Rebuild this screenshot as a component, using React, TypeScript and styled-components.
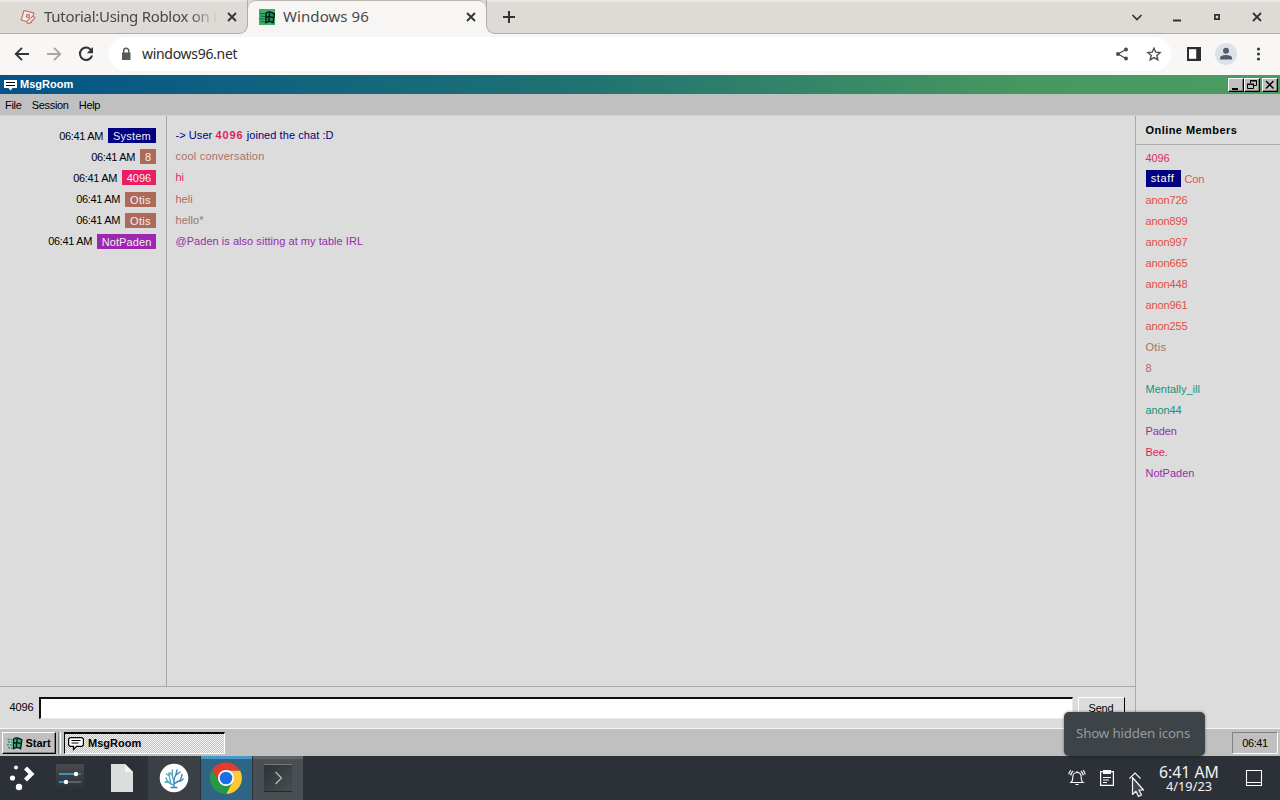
import React from "react";
import styled, { createGlobalStyle, css } from "styled-components";

const Global = createGlobalStyle`
  * { box-sizing: border-box; }
  html, body { margin: 0; padding: 0; width: 1280px; height: 800px; overflow: hidden; }
  body { font-family: "Liberation Sans", sans-serif; font-size: 11px; color: #000; }
  svg { display: block; flex: none; }
`;

const Screen = styled.div`
  position: relative;
  width: 1280px;
  height: 800px;
  display: flex;
  flex-direction: column;
  overflow: hidden;
`;

/* ---------- browser ---------- */

const TabStrip = styled.div`
  display: flex;
  height: 34px;
  flex: none;
  background: linear-gradient(#dedad6 0 16px, #f7f6f5 16px);
  font-family: "Noto Sans", sans-serif;
`;

const IdleTab = styled.div`
  width: 248px;
  display: flex;
  align-items: center;
  padding-left: 20px;
  background: #dedad6;
  border-bottom: 1px solid #b3ada8;
  border-right: 1px solid #b3ada8;
  border-radius: 0 0 9px 0;
  box-shadow: inset 0 2px 0 #e8e5e3;
`;

const ActiveTab = styled.div`
  width: 238px;
  display: flex;
  align-items: center;
  padding: 0 0 1px 11px;
  background: #f7f6f5;
  border-top: 1px solid #b9b3ae;
  border-radius: 8px 8px 0 0;
`;

const StripRest = styled.div`
  flex: 1;
  display: flex;
  align-items: center;
  padding-left: 14px;
  background: #dedad6;
  border-bottom: 1px solid #b3ada8;
  border-left: 1px solid #b3ada8;
  border-radius: 0 0 0 9px;
  box-shadow: inset 0 2px 0 #e8e5e3;
`;

const TabTitle = styled.span<{ $width: number; $fade?: boolean; $spacing?: number }>`
  width: ${(p) => p.$width}px;
  margin-left: 8px;
  margin-top: -2px;
  white-space: nowrap;
  font-size: 15px;
  line-height: 22px;
  letter-spacing: ${(p) => p.$spacing ?? 0}px;
  color: #474849;
  ${(p) =>
    p.$fade &&
    css`
      mask-image: linear-gradient(90deg, #000 145px, transparent 174px);
    `}
`;

const WindowControls = styled.div`
  margin-left: auto;
  margin-right: 15px;
  display: flex;
  gap: 24px;
`;

const Toolbar = styled.div`
  height: 41px;
  flex: none;
  display: flex;
  align-items: center;
  padding: 0 13px 1px 14px;
  background: #f8f7f6;
  font-family: "Noto Sans", sans-serif;
`;

const NavButtons = styled.div`
  display: flex;
  gap: 16px;
  width: 95px;
`;

const AddressBar = styled.div`
  width: 1062px;
  height: 34px;
  border-radius: 17px;
  background: #fff;
  display: flex;
  align-items: center;
  padding: 0 9px 0 9px;
`;

const Url = styled.span`
  flex: 1;
  margin-left: 8px;
  font-size: 14px;
  line-height: 22px;
  letter-spacing: -0.3px;
  color: #2b2b2b;
`;

const AddressActions = styled.div`
  display: flex;
  gap: 16px;
`;

const BrowserActions = styled.div`
  display: flex;
  align-items: center;
  flex: 1;
  padding-left: 14px;
`;

const Avatar = styled.div`
  width: 22px;
  height: 22px;
  margin: 0 12px;
  border-radius: 50%;
  background: #dfe1ea;
  display: flex;
  align-items: center;
  justify-content: center;
`;

/* ---------- MsgRoom window ---------- */

const TitleBar = styled.div`
  height: 19px;
  flex: none;
  display: flex;
  align-items: center;
  padding: 0 2px 0 4px;
  background: linear-gradient(90deg, #045489 0%, #1f7173 44%, #46985f 80%, #4a9d60 100%);
  color: #fff;
`;

const TitleText = styled.span<{ $start?: number; $spacing?: number }>`
  margin-left: ${(p) => p.$start ?? 3}px;
  margin-top: -1px;
  font-weight: bold;
  letter-spacing: ${(p) => p.$spacing ?? 0}px;
`;

const TitleButtons = styled.div`
  margin-left: auto;
  display: flex;
`;

const TitleButton = styled.div<{ $last?: boolean }>`
  width: 16px;
  height: 14px;
  margin-left: ${(p) => (p.$last ? 2 : 0)}px;
  background: #c0c0c0;
  border: 1px solid;
  border-color: #fff #000 #000 #fff;
  box-shadow: inset -1px -1px 0 #808080;
`;

const MenuBar = styled.div`
  height: 21px;
  flex: none;
  display: flex;
  align-items: center;
  gap: 10px;
  padding-left: 5px;
  background: #c0c0c0;
`;

const MenuItem = styled.span<{ $spacing: number }>`
  letter-spacing: ${(p) => p.$spacing}px;
  margin-right: ${(p) => -p.$spacing}px;
`;

const RoomBody = styled.div`
  flex: 1;
  min-height: 0;
  display: flex;
  background: #dcdcdc;
  border-top: 1px solid #d0d0d0;
`;

const ChatColumn = styled.div`
  width: 1135px;
  display: flex;
  flex-direction: column;
`;

const ChatLog = styled.div`
  flex: 1;
  background: linear-gradient(#a6a6a6, #a6a6a6) 166px 0 / 1px 100% no-repeat;
  padding-top: 9px;
`;

const MessageRow = styled.div`
  display: grid;
  grid-template-columns: 156px 1fr;
  column-gap: 19.5px;
  height: 21.2px;
`;

const Author = styled.div`
  display: flex;
  justify-content: flex-end;
  align-items: center;
  height: 15px;
  margin-top: 3px;
`;

const Time = styled.span`
  line-height: 15px;
  letter-spacing: -0.35px;
  padding-top: 1px;
`;

const NameBadge = styled.span<{ $color: string; $spacing?: number; $width: number }>`
  width: ${(p) => p.$width}px;
  height: 15px;
  margin-left: 5px;
  text-align: center;
  line-height: 16px;
  background: ${(p) => p.$color};
  color: #f4eef0;
  letter-spacing: ${(p) => p.$spacing ?? 0}px;
`;

const MessageText = styled.div<{ $color: string; $spacing: number }>`
  height: 15px;
  margin-top: 3px;
  line-height: 15px;
  white-space: pre;
  color: ${(p) => p.$color};
  letter-spacing: ${(p) => p.$spacing}px;
`;

const Mention = styled.b`
  color: #e01e5a;
  letter-spacing: 0.9px;
`;

const Composer = styled.div`
  height: 42px;
  flex: none;
  display: flex;
  align-items: flex-start;
  border-top: 1px solid #a9a9a9;
  padding: 10px 0 0 9.5px;
`;

const Nick = styled.span`
  width: 29.5px;
  line-height: 21px;
  letter-spacing: -0.1px;
`;

const MessageInput = styled.div`
  width: 1034px;
  height: 22px;
  background: #fff;
  border: solid;
  border-width: 2px 1px 1px 2px;
  border-color: #111 #e8e8e8 #e8e8e8 #111;
`;

const SendButton = styled.div`
  width: 47px;
  height: 21px;
  margin-left: 5px;
  border: 1px solid;
  border-color: #fff #000 #000 #fff;
  text-align: center;
  line-height: 20px;
  letter-spacing: -0.15px;
  text-indent: -1px;
`;

const Members = styled.div`
  flex: 1;
  border-left: 1px solid #a9a9a9;
`;

const MembersHeader = styled.div`
  height: 29px;
  padding-left: 9.5px;
  line-height: 29px;
  font-weight: bold;
  letter-spacing: 0.45px;
  border-bottom: 1px solid #ababab;
`;

const MemberList = styled.div`
  padding: 2px 0 0 9.5px;
`;

const Member = styled.div<{ $color: string; $spacing?: number }>`
  height: 21px;
  display: flex;
  align-items: center;
  color: ${(p) => p.$color};
  letter-spacing: ${(p) => p.$spacing ?? -0.1}px;
`;

const StaffBadge = styled.span`
  width: 35px;
  height: 17px;
  margin-right: 4px;
  padding-right: 1px;
  line-height: 17px;
  text-align: center;
  background: #000080;
  color: #fff;
  letter-spacing: 0.6px;
`;

/* ---------- Windows 96 task bar ---------- */

const TaskBar = styled.div`
  height: 28px;
  flex: none;
  display: flex;
  align-items: flex-start;
  padding: 3px 2px 0;
  background: #c0c0c0;
  border-top: 1px solid #f6f6f6;
`;

const StartButton = styled.div`
  width: 54px;
  height: 22px;
  display: flex;
  align-items: center;
  padding-left: 3px;
  border: 1px solid;
  border-color: #fff #000 #000 #fff;
  box-shadow: inset -1px -1px 0 #808080;
`;

const Divider = styled.div`
  width: 3px;
  height: 22px;
  margin: 0 3px 0 2px;
  border-left: 1px solid #8a8a8a;
  border-right: 1px solid #fff;
`;

const TaskButton = styled.div`
  width: 161px;
  height: 22px;
  display: flex;
  align-items: center;
  padding-left: 3px;
  border: solid;
  border-width: 2px 1px 1px 1px;
  border-color: #000 #fff #fff #000;
  background: repeating-conic-gradient(#f4f4f4 0 25%, #c0c0c0 0 50%) 0 0 / 2px 2px;
`;

const TrayClock = styled.div`
  width: 46px;
  height: 22px;
  margin-left: auto;
  text-align: center;
  line-height: 21px;
  letter-spacing: -0.4px;
  border: 1px solid;
  border-color: #808080 #fff #fff #808080;
`;

/* ---------- desktop panel ---------- */

const Panel = styled.div`
  height: 44px;
  flex: none;
  display: flex;
  background: #2b3136;
  color: #f2f3f4;
  font-family: "Noto Sans", sans-serif;
`;

const Launcher = styled.div<{ $width?: number; $bg?: string; $edge?: string; $shift?: number }>`
  width: ${(p) => p.$width ?? 52}px;
  height: 44px;
  display: flex;
  align-items: center;
  justify-content: center;
  padding-right: ${(p) => p.$shift ?? 0}px;
  background: ${(p) => p.$bg ?? "transparent"};
  background-clip: padding-box;
  border-right: 1px solid transparent;
  ${(p) => p.$edge && css`box-shadow: inset 0 3px 0 ${p.$edge};`}
`;

const Tray = styled.div`
  margin-left: auto;
  width: 212px;
  display: flex;
  align-items: center;
`;

const PanelClock = styled.div`
  width: 76px;
  margin-left: 7px;
  margin-right: 1px;
  text-align: center;
  display: flex;
  flex-direction: column;
`;

const ClockTime = styled.span`
  font-size: 15.8px;
  line-height: 17px;
  white-space: nowrap;
`;

const ClockDate = styled.span`
  font-size: 12.8px;
  line-height: 11px;
`;

const Tooltip = styled.div`
  position: absolute;
  left: 1064px;
  top: 712px;
  width: 141px;
  height: 44px;
  padding-left: 12px;
  border-radius: 5px;
  background: #3d4347;
  box-shadow: 0 0 3px rgba(0, 0, 0, 0.45);
  color: #969b9e;
  font-family: "Noto Sans", sans-serif;
  font-size: 13.3px;
  letter-spacing: -0.16px;
  line-height: 42px;
  white-space: nowrap;
`;

const Pointer = styled.svg`
  position: absolute;
  left: 1128px;
  top: 772px;
`;

/* ---------- drawings ---------- */

const CloseGlyph = () => (
  <svg width="16" height="16" viewBox="0 0 16 16" stroke="#333" strokeWidth="1.8" fill="none">
    <path d="M4 4l8 8M12 4l-8 8" />
  </svg>
);

const RobloxIcon = () => (
  <svg width="16" height="16" viewBox="0 0 16 16" fill="#f6e9e6" stroke="#b9736b" strokeWidth="1.1" strokeLinejoin="round">
    <path d="M4 1.500l10 2.600-2.800 9.600L1.200 11z" />
    <path d="M7 5.400l2.600.7-.7 2.500-2.600-.7z" />
    <path d="M7 12.200l6.200-5.400 1.800 2-5.800 5.800-2.200-.6z" />
  </svg>
);

const FlagIcon = ({ tile }: { tile?: boolean }) => (
  <svg width={tile ? 16 : 17} height="16" viewBox="0 0 16 16">
    {tile && <path d="M0 0h16v16H0z" fill="#3fae68" />}
    <path d="M7 4.200c2-1.800 4-1.600 6.400-.4l2 1-1.300 8.800c-2.600-1.500-4.600-1.500-7.200 0z" fill={tile ? "#1f8f5c" : "#27b07b"} stroke="#04140f" strokeWidth="1.3" />
    <path d="M10.700 3.200l-1 9.700M6.600 8.600c2.500-1.500 5-1.400 7.800 0" stroke="#04140f" strokeWidth="1.3" fill="none" />
    <path d="M1 4.300l5 .5M1.500 7l4.500.6M.6 9.700l5 .5M1.500 12.500l4.500.7" stroke={tile ? "#0c5b3c" : "#179a70"} strokeWidth={tile ? 0.9 : 1.4} strokeDasharray={tile ? undefined : "2 1"} />
  </svg>
);

const ChatIcon = ({ large }: { large?: boolean }) => (
  <svg width={large ? 17 : 13} height={large ? 14 : 12} viewBox={large ? "0 0 17 14" : "0 0 13 12"} fill="#fff" stroke="#000">
    {large ? (
      <>
        <path d="M.6 2l1.400-1.400h12L15.400 2v6L14 9.400H8.500L5.500 12.500V9.400H2L.6 8z" strokeWidth="1.2" />
        <path d="M3.500 3.500h9M3.500 6h7" />
      </>
    ) : (
      <>
        <path d="M0 1h13v8H8.500L6.500 11.500 4.500 9H0z" stroke="none" />
        <path d="M2 3.500h9M2 6.500h9" />
      </>
    )}
  </svg>
);

const ChevronDown = () => (
  <svg width="16" height="16" viewBox="0 0 16 16" stroke="#333" strokeWidth="1.7" fill="none">
    <path d="M3.500 6L8 10.500 12.500 6" />
  </svg>
);

const CoralIcon = () => (
  <svg width="30" height="30" viewBox="0 0 30 30" fill="none" strokeLinecap="round">
    <circle cx="15" cy="15" r="14.3" fill="#fff" />
    <g stroke="#3f83bf" strokeWidth="1.4">
      <path d="M12 24.500h6M15 24v-6c0-3 1-5 2-7l1-4M15 20.500c3-1 6-2 7-5l1-4M18 18.500c3 0 5-.5 6-2.500M17 12l4-3" />
    </g>
    <g stroke="#53a9bb" strokeWidth="1.4">
      <path d="M15 22c-4-1-7-3-8-7M10.500 19.500L6 19M12 21c-1-4-2-7-2-11M14.500 18c-1-3-2-6-1-11M10.500 13L7.500 11M13 12l-2-2" />
    </g>
  </svg>
);

const ChromeLogo = () => (
  <svg width="32" height="32" viewBox="0 0 32 32">
    <path d="M16 8.500h14.100A16 16 0 0 1 16 32l6.500-12z" fill="#fcc934" />
    <path d="M2.140 8A16 16 0 0 1 29.860 8.500H16L9.500 20z" fill="#e33b2e" />
    <path d="M2.140 8L9.500 20a7.500 7.500 0 0 0 13 0L16 32A16 16 0 0 1 2.140 8z" fill="#279847" />
    <circle cx="16" cy="16" r="8" fill="#fff" />
    <circle cx="16" cy="16" r="6.3" fill="#1a6fe4" />
  </svg>
);

/* ---------- data ---------- */

const messages = [
  { name: "System", color: "#000080", width: 48, nameSpacing: 0.2, text: "", spacing: 0 },
  { name: "8", color: "#ad6a58", width: 16, text: "cool conversation", textColor: "#ab7366", spacing: 0.2 },
  { name: "4096", color: "#e91e63", width: 34, text: "hi", textColor: "#d92b62", spacing: 0 },
  { name: "Otis", color: "#ad6a58", width: 31, nameSpacing: 0.3, text: "heli", textColor: "#b26a62", spacing: 0 },
  { name: "Otis", color: "#ad6a58", width: 31, nameSpacing: 0.3, text: "hello*", textColor: "#9c7268", spacing: 0.1 },
  { name: "NotPaden", color: "#9c27b0", width: 59, nameSpacing: 0.1, text: "@Paden is also sitting at my table IRL", textColor: "#962cae", spacing: 0.04 },
];

const members: { name: string; color: string; staff?: boolean; spacing?: number }[] = [
  { name: "4096", color: "#d92e60" },
  { name: "Con", color: "#d25a56", staff: true },
  ...["726", "899", "997", "665", "448", "961", "255"].map((n) => ({ name: "anon" + n, color: "#e04f3f" })),
  { name: "Otis", color: "#a8705f", spacing: 0.3 },
  { name: "8", color: "#ad6a58" },
  { name: "Mentally_ill", color: "#159477", spacing: 0 },
  { name: "anon44", color: "#159477" },
  { name: "Paden", color: "#962cae" },
  { name: "Bee.", color: "#dd2460" },
  { name: "NotPaden", color: "#962cae", spacing: 0 },
];

export default function App() {
  return (
    <Screen>
      <Global />
      <TabStrip>
        <IdleTab>
          <RobloxIcon />
          <TabTitle $width={180} $fade $spacing={-0.3}>Tutorial:Using Roblox on L</TabTitle>
          <CloseGlyph />
        </IdleTab>
        <ActiveTab>
          <FlagIcon tile />
          <TabTitle $width={180} $spacing={0.08}>Windows 96</TabTitle>
          <CloseGlyph />
        </ActiveTab>
        <StripRest>
          <svg width="16" height="16" viewBox="0 0 16 16" stroke="#333" strokeWidth="2">
            <path d="M8 2v12M2 8h12" />
          </svg>
          <WindowControls>
            <ChevronDown />
            <svg width="16" height="16" viewBox="0 0 16 16"><path d="M4 10.500h8v2H4z" fill="#333" /></svg>
            <svg width="16" height="16" viewBox="0 0 16 16"><path d="M5.900 5.900h4.200v4.200H5.900z" fill="none" stroke="#333" strokeWidth="1.8" /></svg>
            <CloseGlyph />
          </WindowControls>
        </StripRest>
      </TabStrip>

      <Toolbar>
        <NavButtons>
          <svg width="16" height="16" viewBox="0 0 16 16" stroke="#333" strokeWidth="1.9" fill="none"><path d="M15 8H2M8 1.800L1.800 8 8 14.200" /></svg>
          <svg width="16" height="16" viewBox="0 0 16 16" stroke="#a9a7a6" strokeWidth="1.9" fill="none"><path d="M1 8h13M8 1.800L14.200 8 8 14.200" /></svg>
          <svg width="16" height="16" viewBox="0 0 16 16" fill="none"><path d="M13.300 4.300A6.200 6.200 0 1 0 14.100 9.500" stroke="#333" strokeWidth="2" /><path d="M15 1v6.300H8.800z" fill="#333" /></svg>
        </NavButtons>
        <AddressBar>
          <svg width="16" height="16" viewBox="0 0 16 16"><path d="M4 6.500h8.500V14H4z" fill="#5a5a5a" /><path d="M5.700 7V4.700a2.500 2.500 0 0 1 5 0V7" stroke="#5a5a5a" strokeWidth="1.5" fill="none" /></svg>
          <Url>windows96.net</Url>
          <AddressActions>
            <svg width="16" height="16" viewBox="0 0 16 16" fill="#4c4c4c"><circle cx="4" cy="8" r="2" /><circle cx="12" cy="3.5" r="2" /><circle cx="12" cy="12.5" r="2" /><path d="M12 3.500L4 8l8 4.500" stroke="#4c4c4c" strokeWidth="1.3" fill="none" /></svg>
            <svg width="16" height="16" viewBox="0 0 16 16" fill="none" stroke="#4c4c4c" strokeWidth="1.4"><path d="M8 2.200l1.800 4 4.300.4-3.300 2.900 1 4.300L8 11.600l-3.800 2.200 1-4.300L1.900 6.600l4.300-.4z" /></svg>
          </AddressActions>
        </AddressBar>
        <BrowserActions>
          <svg width="18" height="16" viewBox="0 0 18 16"><path d="M2 1h14v14H2z" fill="#2e2e2e" /><path d="M4 3.200h7.200v9.600H4z" fill="#fff" /></svg>
          <Avatar>
            <svg width="14" height="14" viewBox="0 0 14 14" fill="#545c70"><circle cx="7" cy="3.8" r="3" /><path d="M1 12.500V11c0-2.200 4-3 6-3s6 .8 6 3v1.500z" /></svg>
          </Avatar>
          <svg width="18" height="16" viewBox="0 0 18 16" fill="#3c3c3c"><circle cx="9.5" cy="3" r="1.6" /><circle cx="9.5" cy="8" r="1.6" /><circle cx="9.5" cy="13" r="1.6" /></svg>
        </BrowserActions>
      </Toolbar>

      <TitleBar>
        <ChatIcon />
        <TitleText>MsgRoom</TitleText>
        <TitleButtons>
          <TitleButton><svg width="14" height="12"><path d="M3 9h6v2H3z" /></svg></TitleButton>
          <TitleButton><svg width="14" height="12" fill="none" stroke="#000"><path d="M5.500 4V1.500h6v5H9M5 2h7M2.500 5.500h6v4h-6zM2 5h7" /></svg></TitleButton>
          <TitleButton $last><svg width="14" height="12" stroke="#000" strokeWidth="1.5"><path d="M3 2l7.500 7.500M10.500 2L3 9.500" /></svg></TitleButton>
        </TitleButtons>
      </TitleBar>
      <MenuBar>
        <MenuItem $spacing={-0.3}>File</MenuItem>
        <MenuItem $spacing={-0.35}>Session</MenuItem>
        <MenuItem $spacing={-0.35}>Help</MenuItem>
      </MenuBar>

      <RoomBody>
        <ChatColumn>
          <ChatLog>
            {messages.map((m, i) => (
              <MessageRow key={i}>
                <Author>
                  <Time>06:41 AM</Time>
                  <NameBadge $color={m.color} $width={m.width} $spacing={m.nameSpacing}>{m.name}</NameBadge>
                </Author>
                {i === 0 ? (
                  <MessageText $color="#000080" $spacing={0.07}>
                    {"-> User "}<Mention>4096</Mention>{" joined the chat :D"}
                  </MessageText>
                ) : (
                  <MessageText $color={m.textColor ?? "#000"} $spacing={m.spacing}>{m.text}</MessageText>
                )}
              </MessageRow>
            ))}
          </ChatLog>
          <Composer>
            <Nick>4096</Nick>
            <MessageInput />
            <SendButton>Send</SendButton>
          </Composer>
        </ChatColumn>
        <Members>
          <MembersHeader>Online Members</MembersHeader>
          <MemberList>
            {members.map((m) => (
              <Member key={m.name} $color={m.color} $spacing={m.spacing}>
                {m.staff && <StaffBadge>staff</StaffBadge>}
                {m.name}
              </Member>
            ))}
          </MemberList>
        </Members>
      </RoomBody>

      <TaskBar>
        <StartButton>
          <FlagIcon />
          <TitleText $start={2.5} $spacing={0}>Start</TitleText>
        </StartButton>
        <Divider />
        <TaskButton>
          <ChatIcon large />
          <TitleText>MsgRoom</TitleText>
        </TaskButton>
        <TrayClock>06:41</TrayClock>
      </TaskBar>

      <Panel>
        <Launcher $width={44}>
          <svg width="26" height="28" viewBox="0 0 26 28" fill="#fff"><circle cx="7" cy="3.5" r="2" /><circle cx="3.5" cy="14" r="2.6" /><circle cx="10" cy="23" r="3.2" /><path d="M16.500 4l6 6-6 6" fill="none" stroke="#fff" strokeWidth="4.2" /></svg>
        </Launcher>
        <Launcher>
          <svg width="28" height="30" viewBox="0 0 28 30">
            <defs><linearGradient id="set" x1="0" y1="0" x2="0" y2="1"><stop offset="0" stopColor="#474b50" /><stop offset="1" stopColor="#2a2f34" /></linearGradient></defs>
            <path d="M0 1h28v28H0z" fill="url(#set)" />
            <path d="M3 11h17M3 19h7" stroke="#3daee9" strokeWidth="1.6" />
            <path d="M20 11h5M10 19h15" stroke="#697077" strokeWidth="1.6" />
            <circle cx="20" cy="11" r="2.2" fill="#fff" /><circle cx="10" cy="19" r="2.2" fill="#fff" />
          </svg>
        </Launcher>
        <Launcher>
          <svg width="22" height="28" viewBox="0 0 22 28"><path d="M0 0h14l8 8v20H0z" fill="#dcdddd" /><path d="M14 0l8 8h-8z" fill="#f4f4f4" /></svg>
        </Launcher>
        <Launcher $width={53} $bg="#3a4045"><CoralIcon /></Launcher>
        <Launcher $bg="#2f6484" $edge="#4799c9" $shift={1}><ChromeLogo /></Launcher>
        <Launcher $width={51} $bg="#4a4f53" $edge="#606569">
          <svg width="28" height="28" viewBox="0 0 28 28">
            <defs><linearGradient id="term" x1="0" y1="0" x2="1" y2="1"><stop offset="0" stopColor="#2b3134" /><stop offset="1" stopColor="#4a4f52" /></linearGradient></defs>
            <path d="M0 0h28v28H0z" fill="url(#term)" /><path d="M0 .5h28" stroke="#73787b" /><path d="M0 27.500h28" stroke="#25292c" />
            <path d="M11.500 8l6 6-6 6" fill="none" stroke="#b9bdbf" strokeWidth="1.2" />
          </svg>
        </Launcher>

        <Tray>
          <svg width="18" height="18" viewBox="0 0 18 18" fill="none" stroke="#fcfcfc" strokeWidth="1.1">
            <path d="M3 13.500c1.500-1 1.800-2.500 1.800-5.500 0-2.500 1.500-4.500 4.200-4.500s4.200 2 4.200 4.500c0 3 .3 4.500 1.800 5.500z" /><path d="M9 3.500V2M7.500 15.500h3" /><path d="M2.800 6.500c.2-2 1-3.500 2.400-4.500M.8 5.500C1 3.800 1.800 2.300 3 1.200M15.200 6.500c-.2-2-1-3.500-2.400-4.500M17.200 5.500c-.2-1.700-1-3.200-2.200-4.300" />
          </svg>
          <svg width="42" height="18" viewBox="0 0 42 18" fill="none" stroke="#fcfcfc" strokeWidth="1.2">
            <path d="M14.600 2.600h12.800v13.800H14.600z" /><path d="M17 1h8v4h-8z" fill="#fcfcfc" stroke="none" /><path d="M17 8.500h8M17 11h6M17 13.500h4" />
          </svg>
          <svg width="16" height="18" viewBox="0 0 16 18" fill="none" stroke="#fcfcfc" strokeWidth="1.1"><path d="M1.500 9.500L7 4l5.500 5.500" /></svg>
          <PanelClock>
            <ClockTime>6:41 AM</ClockTime>
            <ClockDate>4/19/23</ClockDate>
          </PanelClock>
          <svg width="40" height="18" viewBox="0 0 40 18" fill="none" stroke="#fcfcfc" strokeWidth="1.1"><path d="M18.500 1.500h15v15h-15zM18.500 13.500h15" /></svg>
        </Tray>
      </Panel>

      <Tooltip>Show hidden icons</Tooltip>
      <Pointer width="18" height="26" viewBox="0 0 18 26">
        <path d="M4.500 5.500v17l3.500-3.200 2.500 5.200 3-1.500-2.500-5h4.500z" fill="#42474b" stroke="#f5f5f5" strokeWidth="1.2" strokeLinejoin="round" />
      </Pointer>
    </Screen>
  );
}
